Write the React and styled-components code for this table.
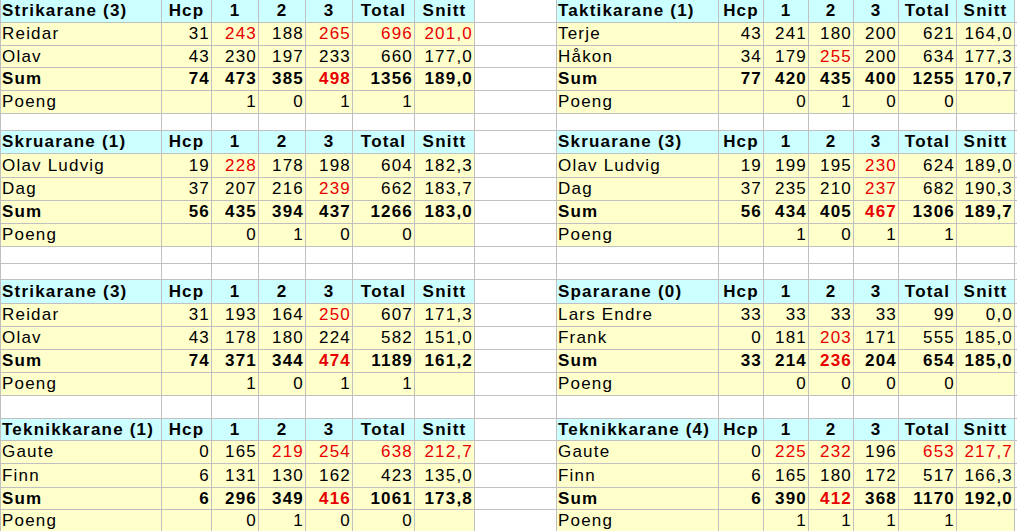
import React from "react";
import styled, { createGlobalStyle } from "styled-components";

const GlobalStyle = createGlobalStyle`
  html, body {
    margin: 0;
    padding: 0;
    background: #fff;
  }
  body {
    font-family: "Liberation Sans", Arial, sans-serif;
    overflow: hidden;
  }
`;

// one team block: header, two players, sum, poeng
const blocks = [
  {
    left: {
      name: "Strikarane (3)",
      players: [
        ["Reidar", "31", "243*", "188", "265*", "696*", "201,0*"],
        ["Olav", "43", "230", "197", "233", "660", "177,0"],
      ],
      sum: ["74", "473", "385", "498*", "1356", "189,0"],
      poeng: ["", "1", "0", "1", "1", ""],
    },
    right: {
      name: "Taktikarane (1)",
      players: [
        ["Terje", "43", "241", "180", "200", "621", "164,0"],
        ["Håkon", "34", "179", "255*", "200", "634", "177,3"],
      ],
      sum: ["77", "420", "435", "400", "1255", "170,7"],
      poeng: ["", "0", "1", "0", "0", ""],
    },
    gap: [16],
  },
  {
    left: {
      name: "Skruarane (1)",
      players: [
        ["Olav Ludvig", "19", "228*", "178", "198", "604", "182,3"],
        ["Dag", "37", "207", "216", "239*", "662", "183,7"],
      ],
      sum: ["56", "435", "394", "437", "1266", "183,0"],
      poeng: ["", "0", "1", "0", "0", ""],
    },
    right: {
      name: "Skruarane (3)",
      players: [
        ["Olav Ludvig", "19", "199", "195", "230*", "624", "189,0"],
        ["Dag", "37", "235", "210", "237*", "682", "190,3"],
      ],
      sum: ["56", "434", "405", "467*", "1306", "189,7"],
      poeng: ["", "1", "0", "1", "1", ""],
    },
    gap: [16, 15],
  },
  {
    left: {
      name: "Strikarane (3)",
      players: [
        ["Reidar", "31", "193", "164", "250*", "607", "171,3"],
        ["Olav", "43", "178", "180", "224", "582", "151,0"],
      ],
      sum: ["74", "371", "344", "474*", "1189", "161,2"],
      poeng: ["", "1", "0", "1", "1", ""],
    },
    right: {
      name: "Spararane (0)",
      players: [
        ["Lars Endre", "33", "33", "33", "33", "99", "0,0"],
        ["Frank", "0", "181", "203*", "171", "555", "185,0"],
      ],
      sum: ["33", "214", "236*", "204", "654", "185,0"],
      poeng: ["", "0", "0", "0", "0", ""],
    },
    gap: [22],
  },
  {
    left: {
      name: "Teknikkarane (1)",
      players: [
        ["Gaute", "0", "165", "219*", "254*", "638*", "212,7*"],
        ["Finn", "6", "131", "130", "162", "423", "135,0"],
      ],
      sum: ["6", "296", "349", "416*", "1061", "173,8"],
      poeng: ["", "0", "1", "0", "0", ""],
    },
    right: {
      name: "Teknikkarane (4)",
      players: [
        ["Gaute", "0", "225*", "232*", "196", "653*", "217,7*"],
        ["Finn", "6", "165", "180", "172", "517", "166,3"],
      ],
      sum: ["6", "390", "412*", "368", "1170", "192,0"],
      poeng: ["", "1", "1", "1", "1", ""],
    },
    gap: [],
  },
];

const heads = ["Hcp", "1", "2", "3", "Total", "Snitt"];

const Sheet = styled.div`
  display: grid;
  grid-template-columns:
    160px 49px 46px 46px 46px 61px 59px
    81px
    161px 44px 44px 44px 44px 57px 57px
    1fr;
  grid-template-rows:
    22px 22px 21px 22px 22px 16px
    22px 23px 22px 22px 22px 16px 15px
    23px 22px 22px 22px 22px 22px
    21px 22px 23px 21px 22px;
  gap: 1px;
  padding-left: 1px;
  width: 1017px;
  box-sizing: border-box;
  background: #c0c0c0;
`;

const Cell = styled.div`
  display: flex;
  align-items: center;
  justify-content: ${(p) =>
    p.$align === "right" ? "flex-end" : p.$align === "center" ? "center" : "flex-start"};
  padding: ${(p) => (p.$align === "right" ? "0 1px 0 0" : p.$align === "center" ? "0" : "0 0 0 1px")};
  background: ${(p) =>
    p.$kind === "head" ? "#ccffff" : p.$kind === "body" ? "#ffffcc" : "#ffffff"};
  color: ${(p) => (p.$red ? "#e80000" : "#000")};
  font-size: 17px;
  line-height: 22px;
  letter-spacing: 1.2px;
  font-weight: ${(p) => (p.$bold ? 700 : 400)};
  white-space: nowrap;
  overflow: visible;
`;

function Value({ v, bold }) {
  const red = v.endsWith("*");
  return (
    <Cell $kind="body" $align="right" $bold={bold} $red={red}>
      {red ? v.slice(0, -1) : v}
    </Cell>
  );
}

function TeamRow({ team, row }) {
  if (row === 0) {
    return (
      <>
        <Cell $kind="head" $bold>{team.name}</Cell>
        {heads.map((h) => (
          <Cell key={h} $kind="head" $align="center" $bold>
            {h}
          </Cell>
        ))}
      </>
    );
  }
  if (row <= 2) {
    const [name, ...vals] = team.players[row - 1];
    return (
      <>
        <Cell $kind="body">{name}</Cell>
        {vals.map((v, i) => (
          <Value key={i} v={v} />
        ))}
      </>
    );
  }
  if (row === 3) {
    return (
      <>
        <Cell $kind="body" $bold>Sum</Cell>
        {team.sum.map((v, i) => (
          <Value key={i} v={v} bold />
        ))}
      </>
    );
  }
  return (
    <>
      <Cell $kind="body">Poeng</Cell>
      {team.poeng.map((v, i) => (
        <Value key={i} v={v} />
      ))}
    </>
  );
}

function EmptyRow() {
  return (
    <>
      {Array.from({ length: 16 }).map((_, i) => (
        <Cell key={i} />
      ))}
    </>
  );
}

export default function App() {
  return (
    <>
      <GlobalStyle />
      <Sheet>
        {blocks.map((b, bi) => (
          <React.Fragment key={bi}>
            {[0, 1, 2, 3, 4].map((r) => (
              <React.Fragment key={r}>
                <TeamRow team={b.left} row={r} />
                <Cell />
                <TeamRow team={b.right} row={r} />
                <Cell />
              </React.Fragment>
            ))}
            {b.gap.map((g, gi) => (
              <EmptyRow key={gi} />
            ))}
          </React.Fragment>
        ))}
      </Sheet>
    </>
  );
}
